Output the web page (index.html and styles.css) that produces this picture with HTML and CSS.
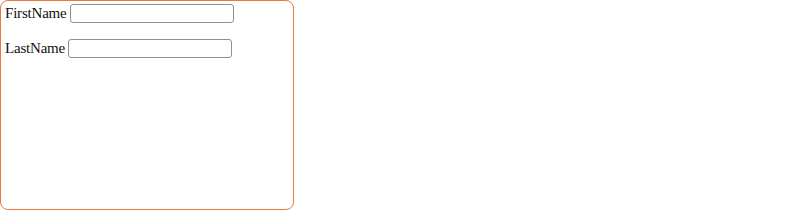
FILE: index.html
```html
<!DOCTYPE html>
<html>
<head>
<meta charset="utf-8">
<link rel="stylesheet" href="styles.css">
</head>
<body>
<div class="panel">
  <div class="row"><label>FirstName</label> <input type="text"></div>
  <div class="row"><label>LastName</label> <input type="text"></div>
</div>
</body>
</html>
```
FILE: styles.css
```css
html, body { margin: 0; padding: 0; background: #fff; }
body { font-family: "Liberation Serif", serif; font-size: 15px; letter-spacing: -0.2px; color: #111; }
.panel {
  box-sizing: border-box;
  width: 294px;
  height: 210px;
  border: 1px solid #ea7840;
  border-radius: 8px;
  padding: 1px 4px 3px 4px;
  display: flex;
  flex-direction: column;
  gap: 13px;
}
.row { display: flex; align-items: center; gap: 3px; line-height: 22px; }
.row input {
  font-family: "Liberation Serif", serif;
  width: 164px;
  height: 19px;
  box-sizing: border-box;
  margin: 0;
  border: 1px solid #8f8f8f;
  border-radius: 3px;
}
```
